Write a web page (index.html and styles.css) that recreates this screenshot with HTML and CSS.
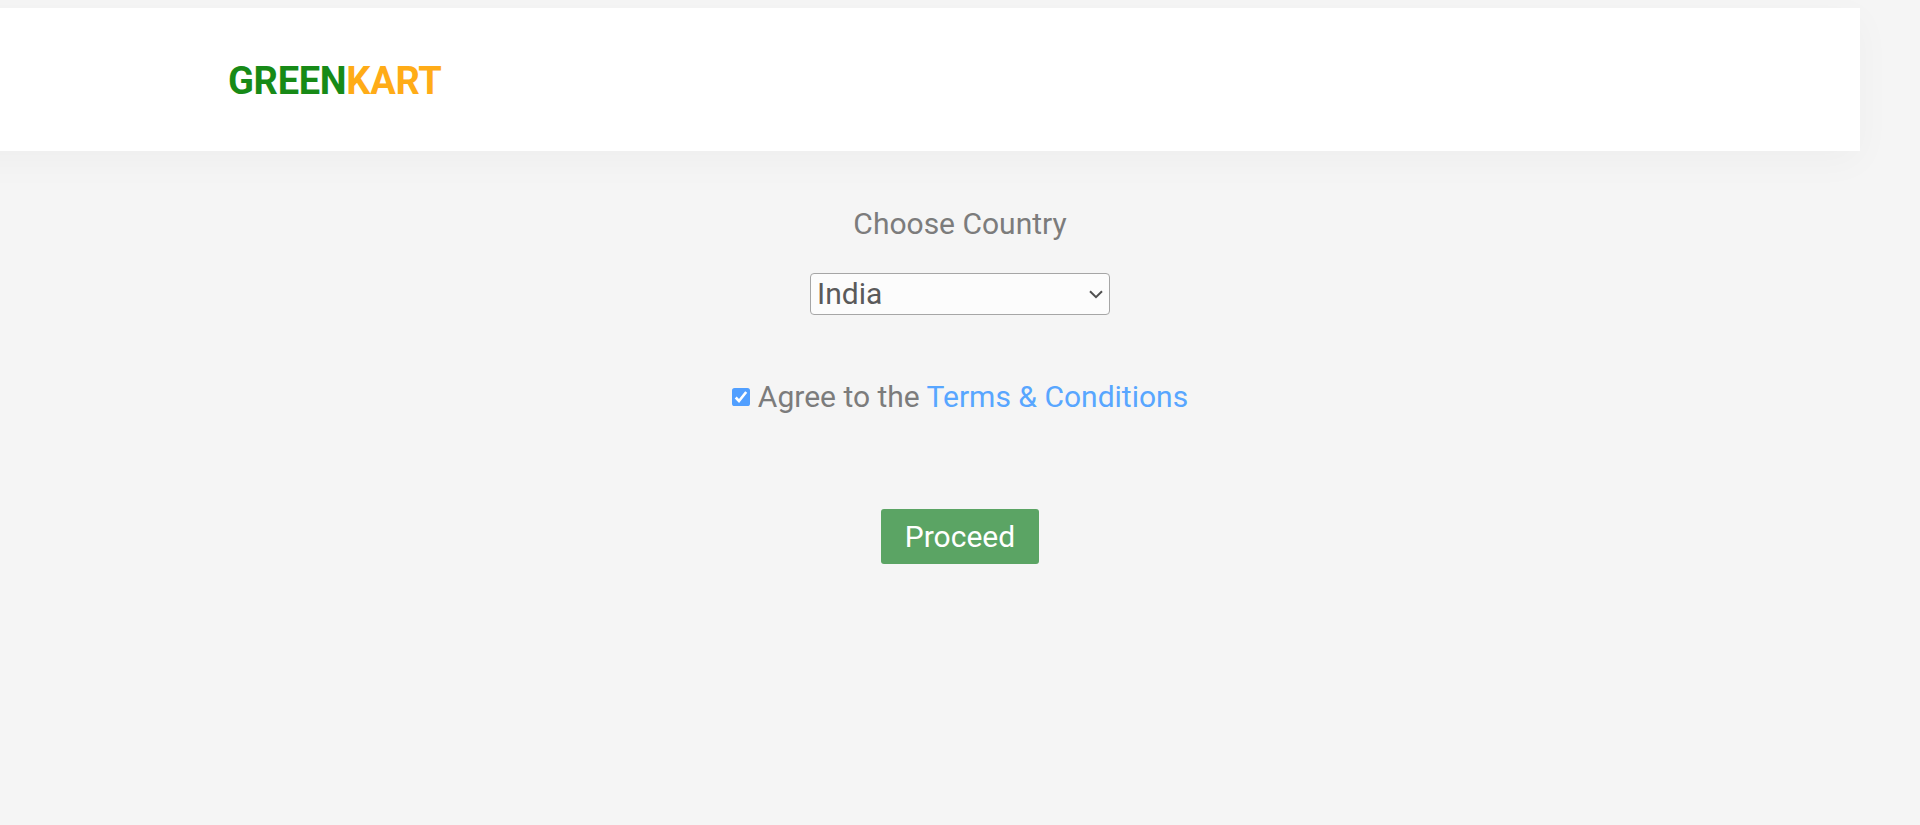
FILE: index.html
```html
<!DOCTYPE html>
<html lang="en">
<head>
<meta charset="utf-8">
<title>GreenKart</title>
<link rel="stylesheet" href="styles.css">
</head>
<body>
<header class="header"><div class="brand">GREEN<span class="brand-accent">KART</span></div></header>
<main class="content">
  <label class="label" for="country">Choose Country</label>
  <div class="select-wrap">
    <select class="select" id="country"><option>India</option></select>
    <svg class="chevron" viewBox="0 0 14 9"><path d="M1 1.2 7 7.2 13 1.2" fill="none" stroke="#505050" stroke-width="2"/></svg>
  </div>
  <div class="agree">
    <svg class="check" viewBox="0 0 18 18"><rect width="18" height="18" rx="2.6" fill="#519fff"/><path d="M3.7 9.5 7 13 14.2 4" fill="none" stroke="#fff" stroke-width="2.6"/></svg>
    <span class="agree-text">Agree to the <a class="link" href="#">Terms &amp; Conditions</a></span>
  </div>
  <button class="proceed">Proceed</button>
</main>
</body>
</html>
```
FILE: styles.css
```css
* { box-sizing: border-box; }
body {
  margin: 0;
  padding-top: 8px;
  height: 825px;
  overflow: hidden;
  background: #f5f5f5;
  color: #7c7c7c;
  font: 30px/36px Roboto, sans-serif;
}
.header {
  display: flex;
  align-items: center;
  width: 1960px;
  height: 143px;
  margin-left: -100px;
  padding: 2px 0 0 328px;
  background: #fff;
  box-shadow: 0 10px 36px rgba(0, 0, 0, 0.03);
}
.brand {
  color: #178a17;
  font-size: 38px;
  font-weight: 700;
  line-height: 46px;
  letter-spacing: -0.3px;
}
.brand-accent { color: #ffac17; }
.content {
  display: flex;
  flex-direction: column;
  align-items: center;
  padding-top: 55px;
}
.select-wrap {
  display: grid;
  width: 300px;
  height: 42px;
  margin-top: 31px;
}
.select {
  grid-area: 1 / 1;
  appearance: none;
  padding: 0 6px;
  border: 1px solid #a6a6a6;
  border-radius: 4px;
  background: #fcfcfc;
  color: #5a5a5a;
  font: inherit;
}
.chevron {
  grid-area: 1 / 1;
  place-self: center end;
  width: 14px;
  height: 9px;
  margin-right: 7px;
  pointer-events: none;
}
.agree {
  display: flex;
  align-items: center;
  gap: 8px;
  margin-top: 64px;
}
.check { width: 18px; height: 18px; }
.link { color: #58a6ff; text-decoration: none; }
.proceed {
  width: 158px;
  height: 55px;
  margin-top: 94px;
  padding: 0;
  border: 0;
  border-radius: 3px;
  background: #5ba464;
  color: #fff;
  font: inherit;
}
```
